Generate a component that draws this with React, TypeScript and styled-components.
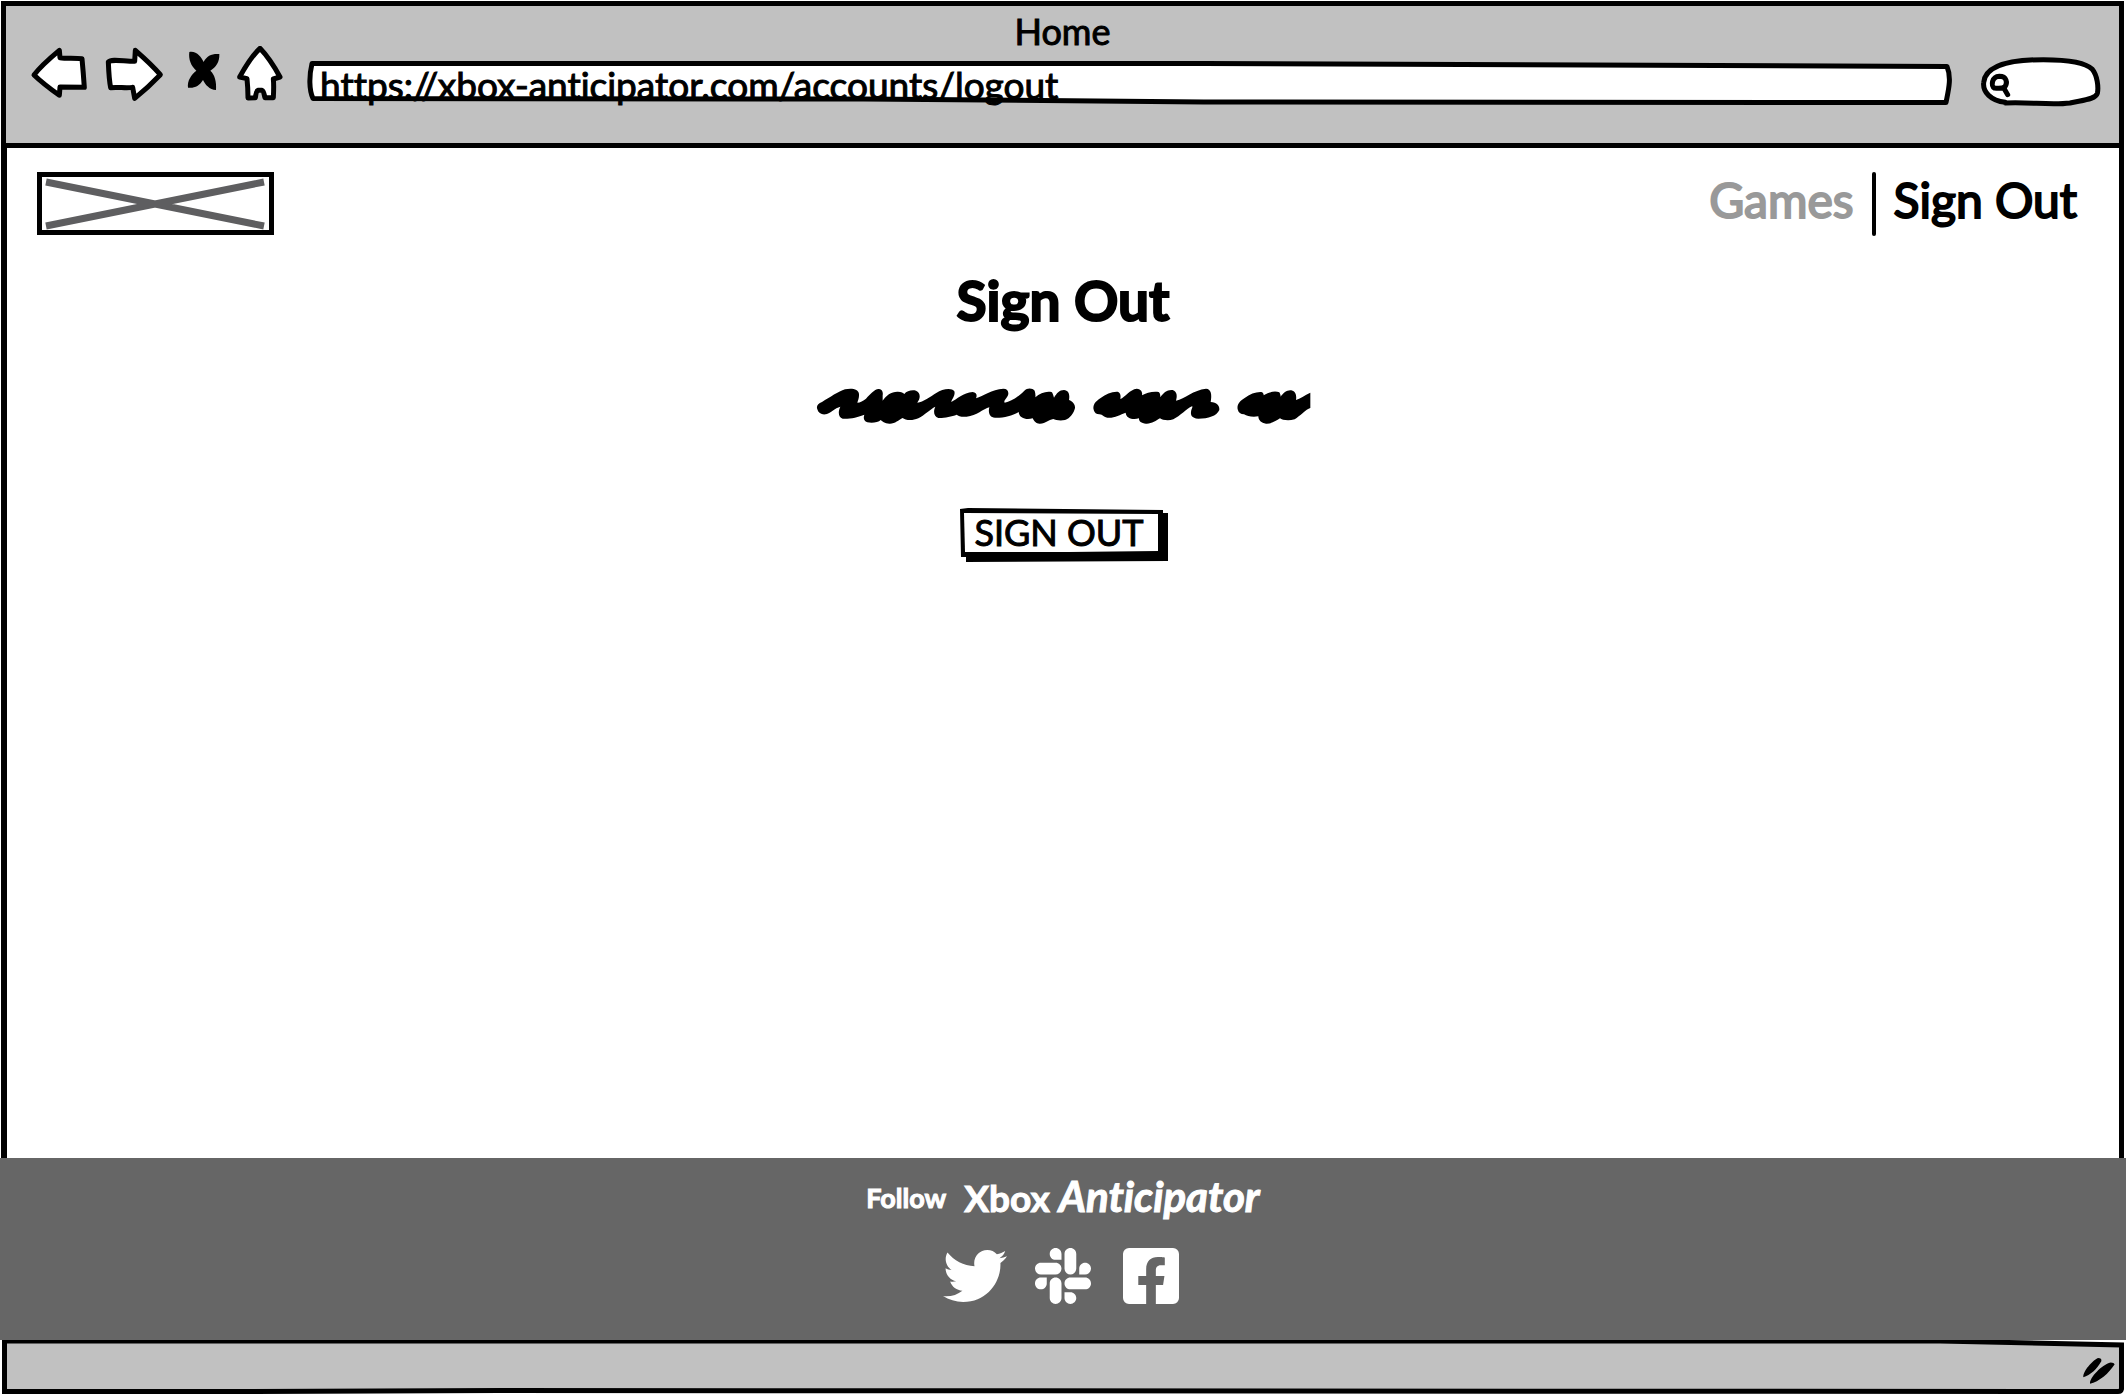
import React from "react";
import styled, { createGlobalStyle } from "styled-components";
import { FaTwitter, FaSlack, FaFacebookSquare } from "react-icons/fa";

const INK = "#000";
const CHROME = "#c1c1c1";

const GlobalStyle = createGlobalStyle`
  *, *::before, *::after { box-sizing: border-box; }
  body {
    margin: 0;
    background: #fff;
    color: ${INK};
    font-family: Lato, "Open Sans", sans-serif;
    font-variant-ligatures: none;
  }
  button, input { font: inherit; color: inherit; font-variant-ligatures: none; }
  a { color: inherit; text-decoration: none; }
`;

const Page = styled.div`
  min-height: 100vh;
  display: flex;
  flex-direction: column;
`;

/* browser chrome */
const Chrome = styled.header`
  margin: 1px 2px 0 1px;
  padding: 8px 16px 35px 24px;
  border: 5px solid ${INK};
  background: ${CHROME};
`;

const WindowTitle = styled.div`
  text-align: center;
  font-size: 36px;
  line-height: 34px;
  padding-right: 8px;
  margin-bottom: -2px;
  -webkit-text-stroke: 1px ${INK};
`;

const Toolbar = styled.div`
  display: flex;
  align-items: flex-start;
  gap: 18px;
  height: 62px;
`;

const NavButtons = styled.div`
  display: flex;
  gap: 12px;
`;

const IconButton = styled.button<{ $width: number }>`
  width: ${(p) => p.$width}px;
  height: 56px;
  padding: 0;
  border: 0;
  background: none;
  cursor: pointer;

  svg {
    display: block;
    width: 100%;
    height: 100%;
    fill: #fff;
    stroke: ${INK};
    stroke-width: 15;
    stroke-linejoin: round;
    stroke-linecap: round;
  }
`;

const Field = styled.label<{ $width?: number }>`
  flex: ${(p) => (p.$width ? `0 0 ${p.$width}px` : "1 1 0")};
  min-width: 0;
  height: 62px;
  display: grid;
  align-items: end;

  > svg, > input { grid-area: 1 / 1; }
  > svg { display: block; width: 100%; height: 62px; }
`;

const FieldInput = styled.input<{ $inset: number }>`
  width: 100%;
  min-width: 0;
  height: 48px;
  padding: 0 16px 0 ${(p) => p.$inset}px;
  border: 0;
  outline: 0;
  background: transparent;
  font-size: 37px;
  -webkit-text-stroke: 1px ${INK};
`;

/* page body */
const Body = styled.main`
  flex: 1;
  margin: 0 2px 0 1px;
  padding: 24px 0;
  border: solid ${INK};
  border-width: 0 5px 0 6px;
  display: flex;
  flex-direction: column;
  align-items: center;
`;

const SiteHeader = styled.div`
  align-self: stretch;
  display: flex;
  justify-content: space-between;
  height: 64px;
  padding: 0 42px 0 30px;
`;

const LogoLink = styled.a`
  width: 237px;
  height: 63px;
  border: 5px solid ${INK};

  svg { display: block; width: 100%; height: 100%; }
`;

const SiteNav = styled.nav`
  display: flex;
  font-size: 48px;
  line-height: 56px;
`;

const NavLink = styled.a<{ $muted?: boolean }>`
  color: ${(p) => (p.$muted ? "#999" : INK)};
  -webkit-text-stroke: 2px ${(p) => (p.$muted ? "#999" : INK)};
`;

const Divider = styled.span`
  width: 4px;
  margin: 0 18px;
  border-radius: 2px;
  background: ${INK};
`;

const Heading = styled.h1`
  margin: 32px 0 52px;
  font-size: 55px;
  line-height: 64px;
  font-weight: 700;
  -webkit-text-stroke: 2px ${INK};
`;

const Scribble = styled.svg`
  display: block;
  width: 496px;
  height: 44px;
`;

const SketchButton = styled.button`
  margin-top: 80px;
  width: 209px;
  height: 54px;
  padding: 0;
  border: 0;
  background: none;
  display: grid;
  font-size: 36px;
  line-height: 48px;
  cursor: pointer;
  -webkit-text-stroke: 1px ${INK};

  > * { grid-area: 1 / 1; }
  > span { padding-right: 8px; }
`;

/* footer and status bar */
const Footer = styled.footer`
  height: 182px;
  background: #666;
  color: #fff;
  display: flex;
  flex-direction: column;
  align-items: center;
  justify-content: space-between;
  padding: 16px 0 32px;
`;

const FollowLine = styled.p`
  margin: 0;
  display: flex;
  align-items: center;
  gap: 18px;
  font-size: 37px;
  line-height: 48px;
  font-weight: 700;
  -webkit-text-stroke: 1px #fff;

  em { font-size: 42px; line-height: 1; }
`;

const Follow = styled.span`
  font-size: 27px;
`;

const Socials = styled.div`
  display: flex;
  gap: 24px;

  a { display: block; height: 64px; font-size: 64px; }
  svg { display: block; }
`;

const StatusBar = styled.div`
  height: 56px;
  display: grid;

  > svg { grid-area: 1 / 1; display: block; }
`;

const BarOutline = styled.svg`
  width: 100%;
  height: 56px;
`;

const Grip = styled.svg`
  justify-self: end;
  align-self: center;
  margin: 6px 10px 0 0;
  width: 34px;
  height: 28px;
`;

export default function App() {
  return (
    <Page>
      <GlobalStyle />
      <Chrome>
        <WindowTitle>Home</WindowTitle>
        <Toolbar>
          <NavButtons>
            <IconButton $width={60} aria-label="Back">
              <svg viewBox="90 48 180 168">
                <path d="M102 135C122 108 148 86 178 61L180 83C200 86 225 83 246 86Q250 128 253 172L180 171L178 196C150 176 126 158 102 135Z" />
              </svg>
            </IconButton>
            <IconButton $width={64} aria-label="Forward">
              <svg viewBox="306 48 192 168">
                <path d="M404 94L406 61C430 82 457 106 481 134C458 158 430 184 404 205L398 172C378 176 355 170 332 173C327 150 326 122 325 96C335 86 370 94 404 94Z" />
              </svg>
            </IconButton>
            <IconButton $width={46} aria-label="Stop">
              <svg viewBox="-6 6 138 168">
                <path
                  d="M28 24C50 20 64 40 71 54C80 34 98 28 118 30C119 54 108 70 91 80C104 92 110 112 108 138C88 137 76 122 69 108C58 126 42 134 24 131C21 110 34 92 49 80C33 66 25 46 28 24Z"
                  fill={INK}
                  stroke="none"
                />
              </svg>
            </IconButton>
            <IconButton $width={50} aria-label="Home">
              <svg viewBox="708 48 150 168">
                <path d="M780 55C806 82 823 110 840 141L820 147C822 166 821 184 820 203L795 203C792 194 792 183 786 181L774 181C767 184 768 194 766 203L744 204Q744 174 741 146L719 141C735 112 753 80 780 55Z" />
              </svg>
            </IconButton>
          </NavButtons>
          <Field>
            <svg viewBox="0 0 1653 62" preserveAspectRatio="none" aria-hidden="true">
              <path
                d="M8 17.500L900 17.500L1643 20.500C1648 32 1644 46 1642 56.500L900 56L560 53L9 52.500C5 44 5 30 8 17.500Z"
                fill="#fff"
                stroke={INK}
                strokeWidth="5"
                strokeLinejoin="round"
                vectorEffect="non-scaling-stroke"
              />
            </svg>
            <FieldInput
              $inset={16}
              type="text"
              aria-label="Address"
              spellCheck={false}
              defaultValue="https://xbox-anticipator.com/accounts/logout"
            />
          </Field>
          <Field $width={128}>
            <svg viewBox="945 138 384 186" fill="none" stroke={INK} strokeWidth="15" strokeLinecap="round" aria-hidden="true">
              <path
                d="M1036 307C992 302 968 276 971 248C974 205 1030 179 1150 179C1230 179 1280 190 1297 208C1312 226 1316 262 1312 280C1307 298 1270 300 1230 309C1170 317 1110 305 1036 309"
                fill="#fff"
              />
              <path d="M1003 264C992 258 995 230 1018 229C1040 229 1044 248 1034 262C1026 265 1012 265 1003 264ZM1030 262L1043 284" />
            </svg>
            <FieldInput $inset={40} type="text" aria-label="Search" />
          </Field>
        </Toolbar>
      </Chrome>

      <Body>
        <SiteHeader>
          <LogoLink href="#" aria-label="Xbox Anticipator">
            <svg viewBox="0 0 227 53" preserveAspectRatio="none" stroke="#5e5e60" strokeWidth="7">
              <path d="M4 5L222 49M4 49L222 5" />
            </svg>
          </LogoLink>
          <SiteNav>
            <NavLink href="#" $muted>Games</NavLink>
            <Divider />
            <NavLink href="#">Sign Out</NavLink>
          </SiteNav>
        </SiteHeader>

        <Heading>Sign Out</Heading>

        <Scribble viewBox="15 12 1488 132" preserveAspectRatio="none" fill={INK} aria-hidden="true">
          <path d="M22 88C18 78 24 70 36 66C60 52 85 34 105 28C125 23 146 27 147 42C148 52 144 62 142 68C150 68 160 62 168 56C180 44 192 28 206 27C216 26 220 36 218 46L218 62C228 46 245 34 264 35C274 35 280 38 283 42C290 33 305 29 318 32C328 36 331 46 328 56C326 62 322 66 322 68C340 66 360 50 380 38C395 28 425 22 433 34C437 46 425 58 424 66C440 58 460 38 488 36C500 37 502 46 498 55C520 48 545 28 580 26C594 26 598 38 593 48C588 58 580 62 584 68C605 64 630 46 643 32C652 22 668 24 674 32C676 38 677 46 676 52C690 40 710 32 726 37C730 44 731 50 732 53C740 40 748 30 762 30C776 32 780 42 777 60C788 64 796 74 795 84C792 98 780 116 765 120C750 123 736 120 730 117C715 120 708 130 690 131C680 132 672 124 668 115C650 120 628 116 626 96C610 106 580 114 555 113C538 112 534 96 538 82C520 86 500 108 470 110C455 112 445 108 440 104C425 110 400 115 385 114C370 110 370 92 376 80C360 88 345 104 325 115C305 124 285 120 278 114C265 120 255 132 238 131C224 130 216 124 212 120C205 128 185 130 172 127C160 122 160 112 163 104C145 112 115 118 98 116C84 112 84 94 91 80C75 84 60 100 48 103C35 105 25 100 22 88Z" />
          <g transform="translate(780 0)">
            <path d="M72 92C66 76 76 64 92 54C108 42 125 34 143 35C152 38 153 48 151 57C165 52 180 28 200 26C214 26 218 38 216 46C228 38 250 33 266 36C271 40 271 46 271 52C280 38 292 28 308 30C322 34 322 50 318 62C345 56 370 30 408 26C424 27 426 44 422 66C440 66 450 78 448 90C440 108 415 116 385 116C364 115 362 104 363 96C364 86 370 80 366 79C350 86 330 108 310 118C295 124 276 120 270 115C258 122 245 132 228 131C214 130 206 124 207 115C190 120 168 116 167 98C150 104 130 116 112 113C98 110 100 104 88 103C78 102 74 98 72 92Z" />
            <path d="M503 88C500 74 510 62 524 54C540 42 558 35 574 36C580 38 581 42 581 46C595 36 615 32 628 37C631 42 632 48 632 50C640 38 652 29 664 31C678 34 680 48 678 60C690 56 704 46 721 38V84C708 88 690 108 674 118C655 124 636 120 630 115C618 122 605 132 588 131C574 130 565 120 565 109C545 112 532 108 522 103C512 103 505 98 503 88Z" />
          </g>
        </Scribble>

        <SketchButton type="button">
          <svg width="209" height="54" viewBox="0 0 209 54" aria-hidden="true">
            <path d="M1 1L9 0L204 2V5H209V53L7 54V49H2Z" fill={INK} />
            <path d="M5 5L199 6V43L110 44L6 44Z" fill="#fff" />
          </svg>
          <span>SIGN OUT</span>
        </SketchButton>
      </Body>

      <Footer>
        <FollowLine>
          <Follow>Follow</Follow>
          <span>
            Xbox <em>Anticipator</em>
          </span>
        </FollowLine>
        <Socials>
          <a href="#" aria-label="Twitter"><FaTwitter /></a>
          <a href="#" aria-label="Slack"><FaSlack /></a>
          <a href="#" aria-label="Facebook"><FaFacebookSquare /></a>
        </Socials>
      </Footer>

      <StatusBar>
        <BarOutline viewBox="0 0 2126 56" preserveAspectRatio="none" aria-hidden="true">
          <path
            d="M4.500 1L1940 1L2121.500 5V49Q2121 51.500 2118 51.500L500 50.500L250 51.500H4.500Z"
            fill={CHROME}
            stroke={INK}
            strokeWidth="5"
            vectorEffect="non-scaling-stroke"
          />
        </BarOutline>
        <Grip viewBox="767 171 102 84" aria-hidden="true">
          <path d="M771 232C769 214 800 180 815 174Q827 174 825 184C812 207 792 226 771 232ZM791 251C789 232 828 194 850 188Q863 187 865 193C848 220 818 246 791 251Z" fill={INK} />
        </Grip>
      </StatusBar>
    </Page>
  );
}
